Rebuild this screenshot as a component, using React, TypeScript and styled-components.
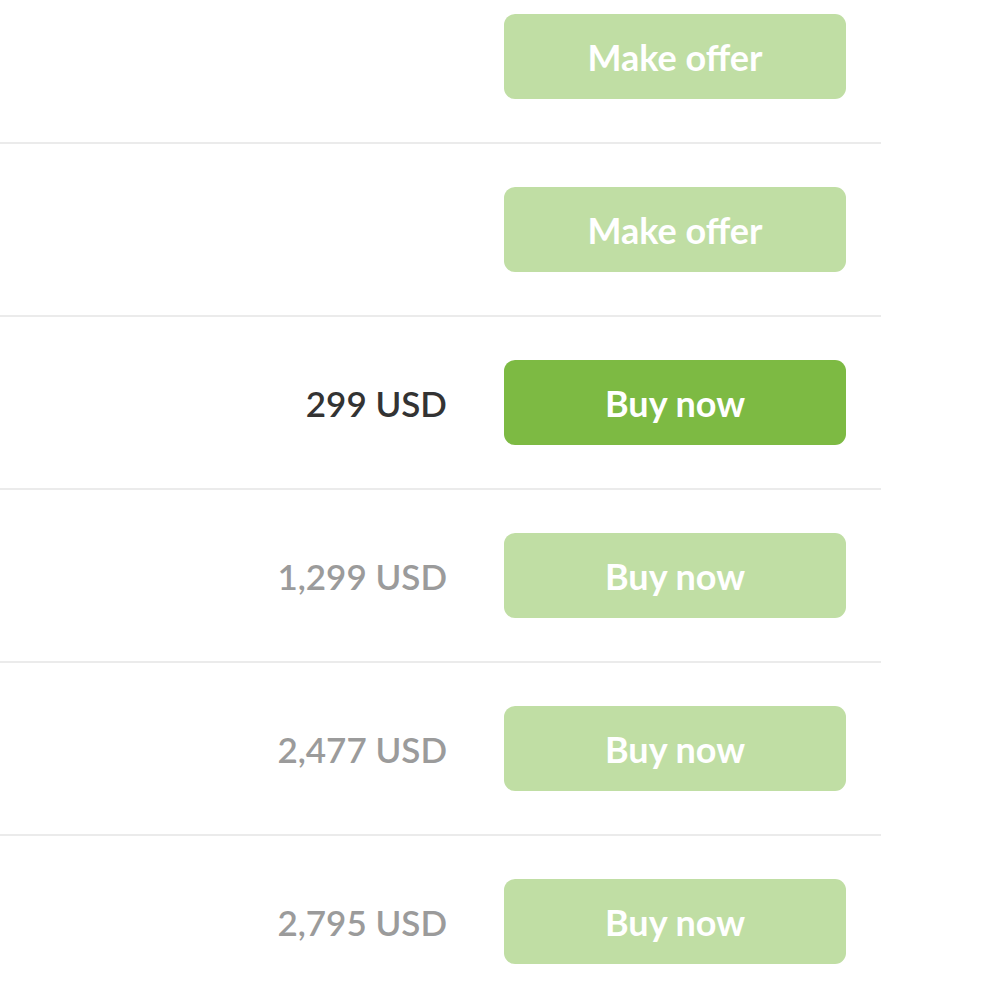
import styled, { createGlobalStyle } from 'styled-components';

const GlobalStyle = createGlobalStyle`
  html, body {
    margin: 0;
    padding: 0;
    background: #fff;
    overflow: hidden;
  }
  body {
    font-family: Lato, "Open Sans", "Liberation Sans", sans-serif;
  }
`;

const OfferList = styled.ul`
  list-style: none;
  margin: -29px 0 0 0;
  padding: 0;
  width: 881px;
`;

const OfferRow = styled.li`
  display: flex;
  align-items: center;
  justify-content: flex-end;
  gap: 57px;
  height: 171px;
  padding-right: 35px;
  border-bottom: 2px solid #ebebeb;
`;

const Price = styled.span<{ $active?: boolean }>`
  font-size: 35px;
  font-weight: 600;
  color: ${(p) => (p.$active ? '#333333' : '#9b9b9b')};
  white-space: nowrap;
`;

const ActionButton = styled.button<{ $active?: boolean }>`
  width: 342px;
  height: 85px;
  border: none;
  border-radius: 11px;
  background: ${(p) => (p.$active ? '#7dba43' : '#c0dea4')};
  color: #fff;
  font-family: inherit;
  font-size: 36px;
  font-weight: 700;
  cursor: pointer;
`;

type Offer = { price?: string; action: string; active?: boolean };

const offers: Offer[] = [
  { action: 'Make offer' },
  { action: 'Make offer' },
  { price: '299 USD', action: 'Buy now', active: true },
  { price: '1,299 USD', action: 'Buy now' },
  { price: '2,477 USD', action: 'Buy now' },
  { price: '2,795 USD', action: 'Buy now' },
];

export default function App() {
  return (
    <>
      <GlobalStyle />
      <OfferList>
        {offers.map((o, i) => (
          <OfferRow key={i}>
            {o.price && <Price $active={o.active}>{o.price}</Price>}
            <ActionButton $active={o.active}>{o.action}</ActionButton>
          </OfferRow>
        ))}
      </OfferList>
    </>
  );
}
